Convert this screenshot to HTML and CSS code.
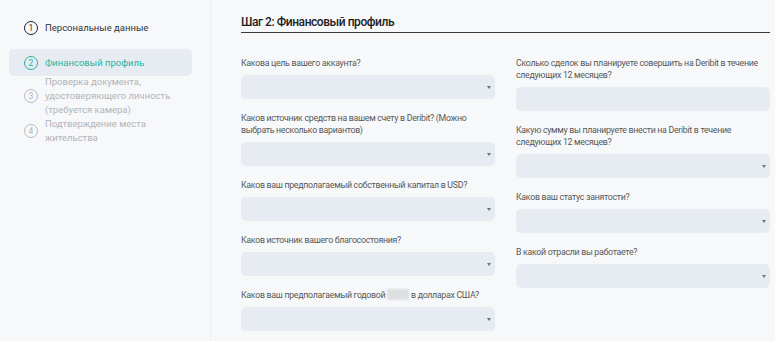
FILE: index.html
```html
<!DOCTYPE html>
<html lang="ru">

<head>
    <meta charset="UTF-8">
    <meta name="viewport" content="width=device-width, initial-scale=1.0">
    <title>Шаг 2: Финансовый профиль</title>
    <link rel="stylesheet" href="styles.css">
</head>

<body>
    <div class="page">
        <aside class="sidebar">
            <ul class="steps">
                <li class="step step-done">
                    <span class="step-num">1</span>
                    <span class="step-text">Персональные данные</span>
                </li>
                <li class="step step-active">
                    <span class="step-num">2</span>
                    <span class="step-text">Финансовый профиль</span>
                </li>
                <li class="step step-next">
                    <span class="step-num">3</span>
                    <span class="step-text">Проверка документа,<br>удостоверяющего личность<br>(требуется камера)</span>
                </li>
                <li class="step step-next">
                    <span class="step-num">4</span>
                    <span class="step-text">Подтверждение места<br>жительства</span>
                </li>
            </ul>
        </aside>

        <main class="content">
            <h1>Шаг 2: Финансовый профиль</h1>

            <div class="form-grid">
                <div class="column">
                    <div class="field">
                        <label>Какова цель вашего аккаунта?</label>
                        <div class="select"><span class="caret"></span></div>
                    </div>
                    <div class="field">
                        <label>Каков источник средств на вашем счету в Deribit? (Можно выбрать несколько вариантов)</label>
                        <div class="select"><span class="caret"></span></div>
                    </div>
                    <div class="field">
                        <label>Каков ваш предполагаемый собственный капитал в USD?</label>
                        <div class="select"><span class="caret"></span></div>
                    </div>
                    <div class="field">
                        <label>Каков источник вашего благосостояния?</label>
                        <div class="select"><span class="caret"></span></div>
                    </div>
                    <div class="field">
                        <label>Каков ваш предполагаемый годовой <span class="hidden-word"></span> в долларах США?</label>
                        <div class="select"><span class="caret"></span></div>
                    </div>
                </div>

                <div class="column">
                    <div class="field">
                        <label>Сколько сделок вы планируете совершить на Deribit в течение следующих 12 месяцев?</label>
                        <div class="select"></div>
                    </div>
                    <div class="field">
                        <label>Какую сумму вы планируете внести на Deribit в течение следующих 12 месяцев?</label>
                        <div class="select"><span class="caret"></span></div>
                    </div>
                    <div class="field">
                        <label>Каков ваш статус занятости?</label>
                        <div class="select"><span class="caret"></span></div>
                    </div>
                    <div class="field">
                        <label>В какой отрасли вы работаете?</label>
                        <div class="select"><span class="caret"></span></div>
                    </div>
                </div>
            </div>
        </main>
    </div>
</body>

</html>
```

FILE: styles.css
```css
body {
    font-family: 'Roboto', 'Liberation Sans', sans-serif;
    background-color: #f7f8fa;
    margin: 0;
    padding: 0;
    color: #4a4a4a;
}

.page {
    display: flex;
    height: 341px;
    overflow: hidden;
}

/* left navigation */
.sidebar {
    width: 210px;
    flex-shrink: 0;
    border-right: 1px solid #eceef1;
}

.steps {
    list-style: none;
    margin: 0;
    padding: 21px 0 0 9px;
    width: 183px;
}

.step {
    display: flex;
    align-items: center;
    gap: 7px;
    padding: 0 0 0 15px;
    font-size: 9.5px;
    line-height: 14px;
}

.step-num {
    width: 12px;
    height: 12px;
    border: 1.3px solid #222;
    border-radius: 50%;
    display: flex;
    align-items: center;
    justify-content: center;
    font-size: 8.5px;
    flex-shrink: 0;
}

.step-done {
    color: #333;
    margin-bottom: 14px;
}

.step-active {
    background-color: #e6ecf1;
    border-radius: 5px;
    padding-top: 6.5px;
    padding-bottom: 6.5px;
    color: #2bb3a1;
    margin-bottom: -1px;
}

.step-active .step-num {
    border-color: #2bb3a1;
}

.step-next {
    color: #b1b4b8;
}

.step-next .step-num {
    border-color: #b9bcc0;
    border-width: 1px;
}

/* form area */
.content {
    flex: 1;
    padding: 14px 5px 0 30px;
}

h1 {
    font-size: 12px;
    font-weight: 500;
    letter-spacing: -0.45px;
    color: #222;
    margin: 0;
    line-height: 17px;
    padding-bottom: 1px;
    border-bottom: 1.5px solid #3c3c3c;
}

.form-grid {
    display: grid;
    grid-template-columns: 1fr 1fr;
    column-gap: 21px;
    margin-top: 24px;
}

.field {
    margin-bottom: 13px;
}

.field label {
    display: block;
    font-size: 8.8px;
    letter-spacing: -0.3px;
    line-height: 12px;
    margin-bottom: 6px;
    color: #585858;
}

.select {
    height: 24px;
    border-radius: 5px;
    background-color: #e6ecf2;
    display: flex;
    align-items: center;
    justify-content: flex-end;
    padding-right: 4px;
}

.caret {
    width: 0;
    height: 0;
    border-left: 2.5px solid transparent;
    border-right: 2.5px solid transparent;
    border-top: 3px solid #707478;
}

.hidden-word {
    display: inline-block;
    width: 22px;
    height: 11px;
    vertical-align: -2px;
    background-color: #dedfe1;
    filter: blur(0.8px);
}
```
